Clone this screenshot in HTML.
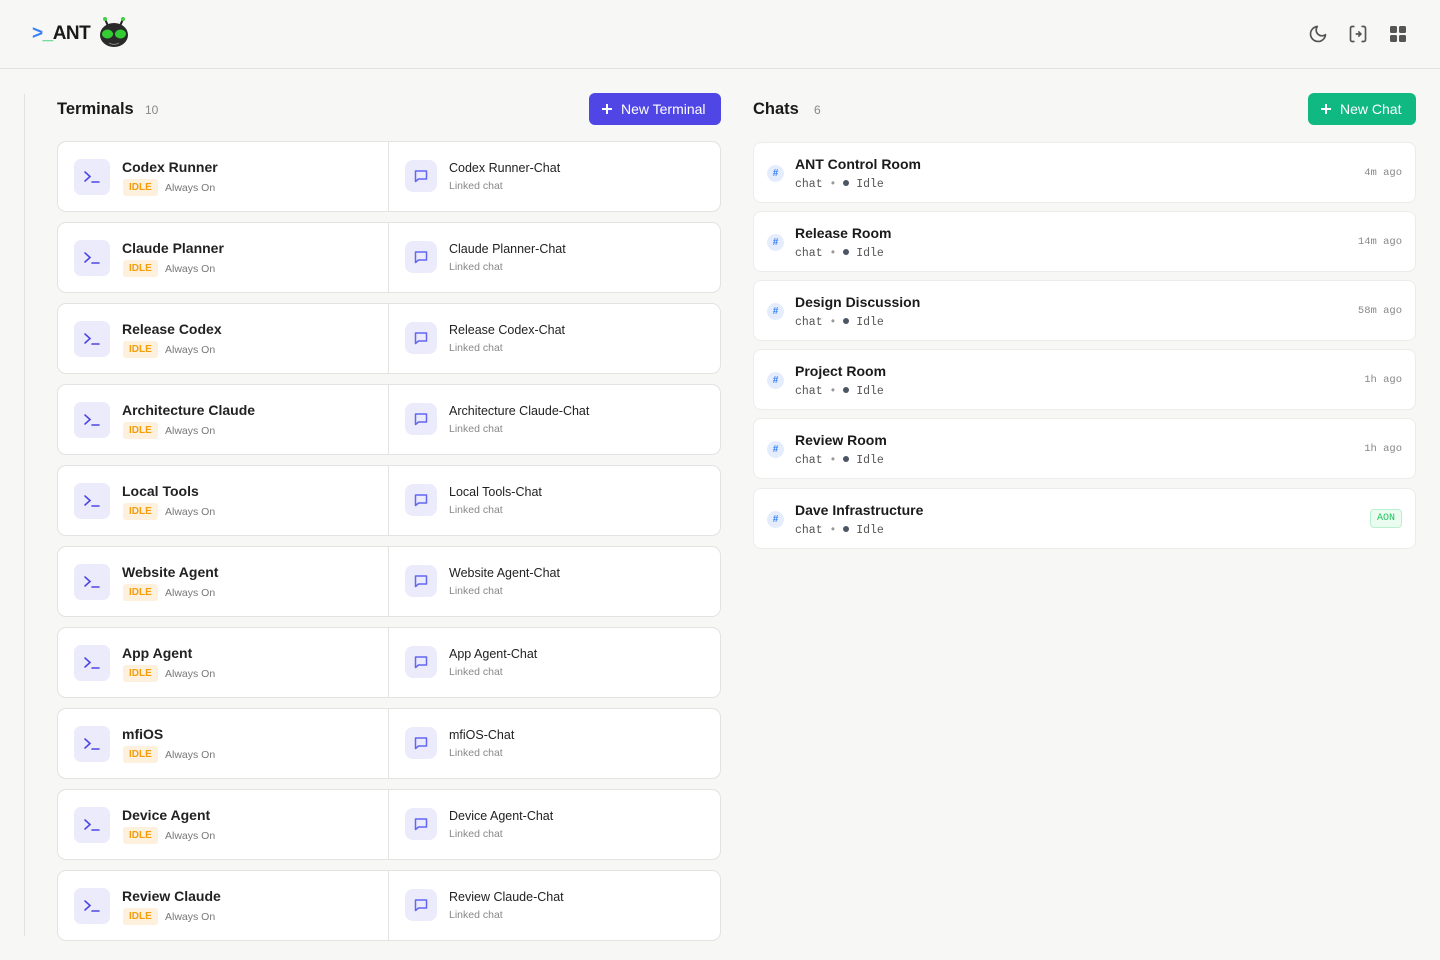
<!DOCTYPE html><html><head><style>
*{box-sizing:border-box;margin:0;padding:0}
body{width:1440px;height:960px;background:#f7f7f5;font-family:"Liberation Sans",sans-serif;position:relative;overflow:hidden;color:#1a1a1a}
.hdr{position:absolute;left:0;top:0;width:1440px;height:69px;border-bottom:1px solid #e2e2e0}
.logo{position:absolute;left:32px;top:23px;font-weight:bold;font-size:19px;letter-spacing:-0.5px}
.vl{position:absolute;left:24px;top:94px;width:1px;height:842px;background:#e2e2e0}
h2{position:absolute;font-size:16.5px;font-weight:bold;top:100px}
.cnt{position:absolute;top:103px;font-size:12px;color:#888}
.btn{position:absolute;top:93px;height:32px;border-radius:6px;color:#fff;font-size:14px;line-height:32px;padding-left:32px}
.btn:before{content:"";position:absolute;left:13px;top:15px;width:10px;height:1.6px;background:#fff}
.btn:after{content:"";position:absolute;left:17.2px;top:10.8px;width:1.6px;height:10px;background:#fff}
.tc{position:absolute;left:57px;width:664px;height:71px;background:#fff;border:1px solid #e3e3e1;border-radius:9px}
.tc .d{position:absolute;left:330px;top:0;width:1px;height:69px;background:#e3e3e1}
.ic{position:absolute;width:36px;height:36px;border-radius:7px;background:#ebebfb}
.tn{position:absolute;left:64px;top:17px;font-size:14px;font-weight:bold;color:#222}
.idle{position:absolute;left:65px;top:37px;background:#fdf0dc;color:#f59e0b;font-size:10px;font-weight:bold;padding:3px 6px;border-radius:3px}
.ao{position:absolute;left:107px;top:40px;font-size:10.5px;color:#777}
.cn{position:absolute;left:391px;top:19px;font-size:12.5px;color:#222}
.lc{position:absolute;left:391px;top:38px;font-size:10.5px;color:#888}
.cc{position:absolute;left:753px;width:663px;height:61px;background:#fff;border:1px solid #ececea;border-radius:8px}
.hash{position:absolute;left:13px;top:22px;width:17px;height:17px;border-radius:50%;background:#e5edfd;color:#3b82f6;font-size:10px;font-weight:bold;text-align:center;line-height:17px}
.ct{position:absolute;left:41px;top:13px;font-size:14px;font-weight:bold}
.cs{position:absolute;left:41px;top:35px;font:11.5px "Liberation Mono",monospace;color:#555}
.tm{position:absolute;right:13px;top:24px;font:10.5px "Liberation Mono",monospace;color:#888}
</style></head><body>
<div class="hdr">
<div class="logo"><span style="color:#3b82f6">&gt;</span><span style="color:#22c55e">_</span>ANT</div>
<svg style="position:absolute;left:98px;top:16px" width="32" height="32" viewBox="0 0 32 32"><path d="M10 10 L7 3 M22 10 L25 3" stroke="#222" stroke-width="2"/><circle cx="7" cy="3" r="2" fill="#4c4"/><circle cx="25" cy="3" r="2" fill="#4c4"/><ellipse cx="16" cy="19" rx="14" ry="12" fill="#2a2a2a"/><ellipse cx="9.5" cy="18" rx="5.5" ry="4.5" fill="#3c3"/><ellipse cx="22.5" cy="18" rx="5.5" ry="4.5" fill="#3c3"/><path d="M11 27 Q16 30 21 27" stroke="#888" fill="none"/></svg>
<svg style="position:absolute;left:1308px;top:24px" width="20" height="20" viewBox="0 0 24 24" fill="none" stroke="#555" stroke-width="2" stroke-linecap="round" stroke-linejoin="round"><path d="M21 12.8A9 9 0 1 1 11.2 3a7 7 0 0 0 9.8 9.8z"/></svg>
<svg style="position:absolute;left:1348px;top:24px" width="20" height="20" viewBox="0 0 24 24" fill="none" stroke="#555" stroke-width="2" stroke-linecap="round"><path d="M7 3H5a2 2 0 0 0-2 2v14a2 2 0 0 0 2 2h2M17 3h2a2 2 0 0 1 2 2v14a2 2 0 0 1-2 2h-2"/><path d="M10 12h5M13 9.5l2.5 2.5-2.5 2.5"/></svg>
<svg style="position:absolute;left:1389px;top:25px" width="18" height="18" viewBox="0 0 18 18" fill="#555"><rect x="1" y="1" width="7" height="7" rx="1.5"/><rect x="10" y="1" width="7" height="7" rx="1.5"/><rect x="1" y="10" width="7" height="7" rx="1.5"/><rect x="10" y="10" width="7" height="7" rx="1.5"/></svg>
</div>
<div class="vl"></div>
<h2 style="left:57px">Terminals</h2><span class="cnt" style="left:145px">10</span>
<div class="btn" style="left:589px;width:132px;background:#4f46e5">New Terminal</div>
<h2 style="left:753px">Chats</h2><span class="cnt" style="left:814px">6</span>
<div class="btn" style="left:1308px;width:108px;background:#10b981">New Chat</div>
<div id="t"></div><div id="c"></div>
<script>
var T=["Codex Runner","Claude Planner","Release Codex","Architecture Claude","Local Tools","Website Agent","App Agent","mfiOS","Device Agent","Review Claude"];
var L=["Codex Runner-Chat","Claude Planner-Chat","Release Codex-Chat","Architecture Claude-Chat","Local Tools-Chat","Website Agent-Chat","App Agent-Chat","mfiOS-Chat","Device Agent-Chat","Review Claude-Chat"];
var h="";
T.forEach(function(n,i){h+='<div class="tc" style="top:'+(141+i*81)+'px"><div class="d"></div><div class="ic" style="left:16px;top:17px"><svg width="36" height="36" viewBox="0 0 36 36" fill="none" stroke="#4f46e5" stroke-width="1.6" stroke-linecap="round"><path d="M11 13l5 4.5-5 4.5M18 23h7"/></svg></div><div class="tn">'+n+'</div><div class="idle">IDLE</div><div class="ao">Always On</div><div class="ic" style="left:347px;top:18px;width:32px;height:32px;border-radius:8px"><svg width="32" height="32" viewBox="0 0 32 32" fill="none" stroke="#6366f1" stroke-width="1.5" stroke-linejoin="round"><path d="M10.5 11h11v8h-8l-3 2.5z"/></svg></div><div class="cn">'+L[i]+'</div><div class="lc">Linked chat</div></div>'});
document.getElementById("t").innerHTML=h;
var C=[["ANT Control Room","4m ago"],["Release Room","14m ago"],["Design Discussion","58m ago"],["Project Room","1h ago"],["Review Room","1h ago"],["Dave Infrastructure",""]];
h="";
C.forEach(function(c,i){var tp=[142,211,280,349,418,488][i];h+='<div class="cc" style="top:'+tp+'px"><div class="hash">#</div><div class="ct">'+c[0]+'</div><div class="cs">chat <span style="color:#999">•</span> <span style="display:inline-block;width:6px;height:6px;border-radius:50%;background:#4b5563;vertical-align:1px"></span> Idle</div>'+(c[1]?'<div class="tm">'+c[1]+'</div>':'<div style="position:absolute;right:13px;top:20px;border:1px solid #bbf0cf;background:#eafbf0;color:#22c55e;font:10px \'Liberation Mono\',monospace;padding:3px 6px;border-radius:4px">AON</div>')+'</div>'});
document.getElementById("c").innerHTML=h;
</script>
</body></html>
